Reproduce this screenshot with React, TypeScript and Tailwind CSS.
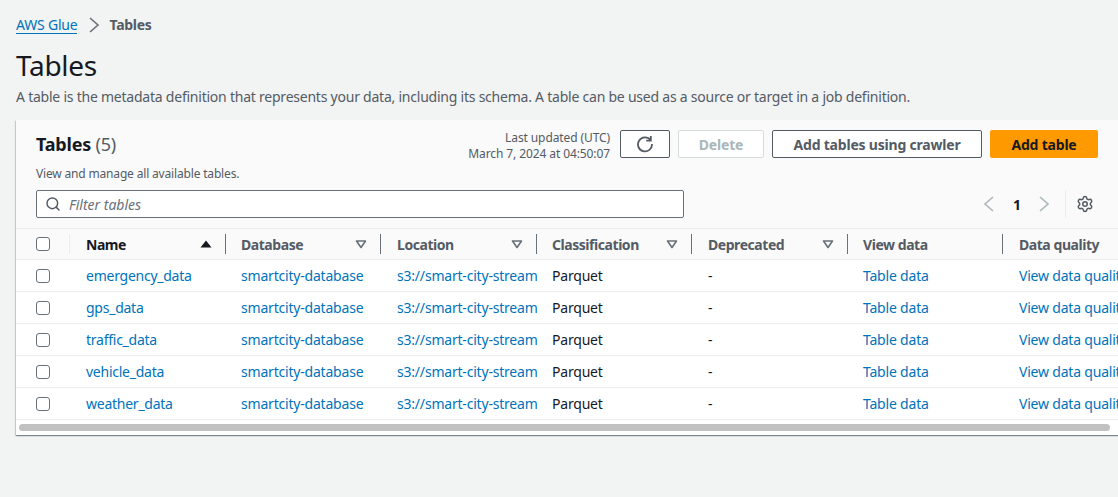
import { Search, Settings } from "lucide-react";

const tables = ["emergency_data", "gps_data", "traffic_data", "vehicle_data", "weather_data"];

const columns = [
  { label: "Name", width: "w-[156px]", sort: "up", pad: "pl-4" },
  { label: "Database", width: "w-[155px]", sort: "down", pad: "pl-[15px]" },
  { label: "Location", width: "w-[156px]", sort: "down", pad: "pl-4" },
  { label: "Classification", width: "w-[155px]", sort: "down", pad: "pl-[15px]" },
  { label: "Deprecated", width: "w-[156px]", sort: "down", pad: "pl-4" },
  { label: "View data", width: "w-[155px]", sort: "", pad: "pl-[15px]" },
  { label: "Data quality", width: "w-[155px]", sort: "", pad: "pl-4" },
];

function Checkbox() {
  return <span className="block w-[14px] h-[14px] rounded-[3px] border border-[#687078] bg-white" />;
}

function SortIcon({ dir }: { dir: string }) {
  if (dir === "up") {
    return (
      <svg width="12" height="8" viewBox="0 0 12 8" className="shrink-0">
        <path d="M6 0.5 L11.5 7.5 H0.5 Z" fill="#16191f" />
      </svg>
    );
  }
  return (
    <svg width="12" height="9" viewBox="0 0 12 9" className="shrink-0">
      <path d="M1.5 1 H10.5 L6 7.5 Z" fill="none" stroke="#687078" strokeWidth="1.6" strokeLinejoin="round" />
    </svg>
  );
}

function Chevron({ left, color }: { left?: boolean; color: string }) {
  return (
    <svg width="11" height="16" viewBox="0 0 11 16" fill="none" stroke={color} strokeWidth="1.6" className="shrink-0">
      <path d={left ? "M10 1 L2 8 L10 15" : "M1 1 L9 8 L1 15"} />
    </svg>
  );
}

export default function App() {
  return (
    <div className="w-[1118px] h-[497px] overflow-hidden bg-[#f2f3f3] pl-4 text-[14px] text-[#16191f] font-['Noto_Sans',sans-serif]">
      {/* breadcrumb */}
      <div className="flex items-center h-[18px] mt-4 leading-[18px]">
        <a className="text-[#0073bb] border-b border-[#0073bb] leading-[17px] tracking-[-0.2px]">AWS Glue</a>
        <span className="ml-[12px] mr-[9px]"><Chevron color="#687078" /></span>
        <span className="font-bold text-[#545b64] tracking-[-0.3px]">Tables</span>
      </div>

      <h1 className="mt-[13px] text-[28px] leading-[36px] tracking-[-0.3px]">Tables</h1>
      <p className="mt-[4px] leading-[20px] text-[#545b64] tracking-[-0.23px] whitespace-nowrap">
        A table is the metadata definition that represents your data, including its schema. A table can be used as a source or target in a job definition.
      </p>

      {/* card */}
      <div className="mt-[13px] w-[1110px] bg-white shadow-[0_1px_1px_0_rgba(0,28,36,0.3),1px_1px_1px_0_rgba(0,28,36,0.15),-1px_1px_1px_0_rgba(0,28,36,0.15)] overflow-hidden">
        <div className="bg-[#fafafa] h-[108px] pl-5 pt-[10px]">
          <div className="flex items-start justify-between w-[1062px] h-[60px]">
            <div>
              <h2 className="text-[18px] leading-[28px] font-bold tracking-[-0.2px]">
                Tables <span className="font-normal text-[#545b64]">(5)</span>
              </h2>
              <p className="mt-[8px] text-[12px] leading-[16px] text-[#545b64] tracking-[-0.17px]">View and manage all available tables.</p>
            </div>
            <div className="flex items-start gap-2">
              <div className="text-right text-[12px] leading-[16px] text-[#545b64] tracking-[-0.1px] mr-[2px]">
                <div>Last updated (UTC)</div>
                <div>March 7, 2024 at 04:50:07</div>
              </div>
              <button className="w-[50px] h-[28px] flex items-center justify-center bg-white border border-[#545b64] rounded-[2px]">
                <svg width="18" height="18" viewBox="0 0 18 18" fill="none" stroke="#545b64" strokeWidth="1.8">
                  <path d="M14.6 5.2 A7 7 0 1 0 16 9" />
                  <path d="M14.8 1 V5.6 H10.2" />
                </svg>
              </button>
              <button className="w-[86px] h-[28px] border border-[#d5dbdb] rounded-[2px] bg-white text-[#aab7b8] font-bold tracking-[-0.2px]">Delete</button>
              <button className="w-[210px] h-[28px] border border-[#545b64] rounded-[2px] bg-white text-[#545b64] font-bold tracking-[-0.2px] whitespace-nowrap">Add tables using crawler</button>
              <button className="w-[108px] h-[28px] rounded-[2px] bg-[#ff9900] text-[#16191f] font-bold tracking-[-0.2px]">Add table</button>
            </div>
          </div>
          <div className="flex items-center justify-between w-[1062px]">
            <label className="w-[648px] h-[28px] flex items-center gap-[8px] bg-white border border-[#687078] rounded-[2px] pl-2">
              <Search className="w-[16px] h-[16px] text-[#545b64]" strokeWidth={2.2} />
              <span className="italic text-[#687078]">Filter tables</span>
            </label>
            <div className="flex items-center pr-[4px]">
              <Chevron left color="#aab7b8" />
              <span className="ml-[19px] mr-[18px] w-[8px] text-center font-bold">1</span>
              <Chevron color="#aab7b8" />
              <span className="ml-[15px] w-px h-[28px] bg-[#eaeded]" />
              <Settings className="w-[18px] h-[18px] ml-[10px] text-[#545b64]" strokeWidth={2} />
            </div>
          </div>
        </div>

        <table className="table-fixed w-[1142px] border-collapse">
          <thead>
            <tr className="h-[31px] bg-[#fafafa] border-y border-[#eaeded]">
              <th className="w-[54px] p-0 font-normal">
                <div className="flex items-center h-[20px] pl-5 border-r border-[#eaeded]">
                  <Checkbox />
                </div>
              </th>
              {columns.map((c, i) => (
                <th key={c.label} className={`${c.width} p-0 text-left`}>
                  <div className={`flex items-center justify-between h-[20px] ${c.pad} pr-[13px] tracking-[-0.45px] ${i < 6 ? "border-r border-[#687078]" : ""} ${c.sort === "up" ? "text-[#16191f]" : "text-[#545b64]"}`}>
                    <span>{c.label}</span>
                    {c.sort && <SortIcon dir={c.sort} />}
                  </div>
                </th>
              ))}
            </tr>
          </thead>
          <tbody>
            {tables.map((name) => (
              <tr key={name} className="h-[32px] border-b border-[#eaeded] text-left">
                <td className="pl-5"><Checkbox /></td>
                <td className="pl-4 text-[#0073bb] tracking-[-0.25px]">{name}</td>
                <td className="pl-[15px] text-[#0073bb] tracking-[-0.2px] whitespace-nowrap">smartcity-database</td>
                <td className="pl-4 text-[#0073bb] tracking-[-0.2px] whitespace-nowrap overflow-hidden">s3://smart-city-stream</td>
                <td className="pl-[15px] tracking-[-0.2px]">Parquet</td>
                <td className="pl-4">-</td>
                <td className="pl-[15px] text-[#0073bb] tracking-[-0.2px]">Table data</td>
                <td className="pl-4 text-[#0073bb] tracking-[-0.2px] whitespace-nowrap overflow-hidden">View data quality</td>
              </tr>
            ))}
          </tbody>
        </table>

        <div className="h-[15px] flex items-center pl-[3px] bg-white">
          <div className="h-[7px] w-[1091px] rounded-full bg-[#c1c1c1]" />
        </div>
      </div>
    </div>
  );
}
